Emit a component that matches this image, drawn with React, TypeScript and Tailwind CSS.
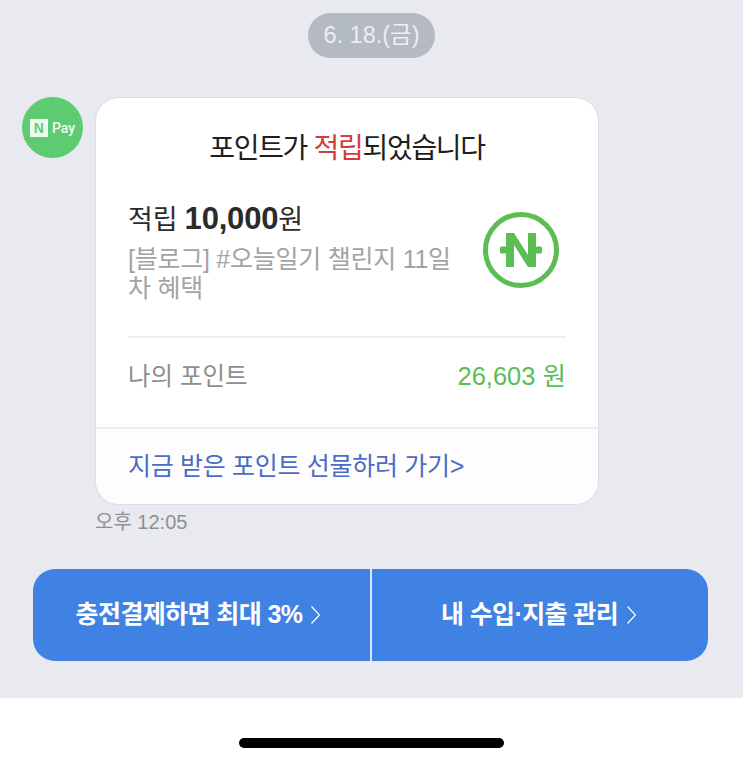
const font = "font-['Liberation_Sans','Noto_Sans_CJK_KR',sans-serif]";

function NPayLogo() {
    return (
        <div className="w-[61px] h-[61px] rounded-full bg-[#5ccb72] shrink-0 flex items-center justify-center gap-[4px]">
            <div className="w-[18px] h-[18px] bg-white/90 flex items-center justify-center text-[#5ccb72] text-[14px] font-bold leading-none">N</div>
            <span className="font-['Roboto',sans-serif] text-white/90 text-[14px] font-medium leading-none">Pay</span>
        </div>
    );
}

function PointIcon() {
    return (
        <svg width="78" height="78" viewBox="0 0 78 78" className="shrink-0">
            <circle cx="39" cy="39" r="35.5" fill="none" stroke="#5cbd55" strokeWidth="5" />
            <path d="M24 22h8l14 22V22h8v34h-8L32 34v22h-8z" fill="#5cbd55" />
            <rect x="18" y="35.5" width="7" height="7" rx="1.5" fill="#5cbd55" />
            <rect x="53" y="35.5" width="7" height="7" rx="1.5" fill="#5cbd55" />
        </svg>
    );
}

function Chevron() {
    return (
        <svg width="9" height="18" viewBox="0 0 9 18" fill="none" stroke="white" strokeWidth="1.2"><path d="M.5.5l8 8.5-8 8.5" /></svg>
    );
}

export default function App() {
    return (
        <div className={`${font} w-[743px] h-[763px] overflow-hidden bg-white flex flex-col`}>
            <div className="h-[698px] bg-[#e9eaef] flex flex-col">
                <div className="flex justify-center pt-[13px]">
                    <div className="w-[127px] h-[45px] rounded-full bg-[#b4bac1] text-[#eceef0] text-[23.5px] flex items-center justify-center">
                        6. 18.(금)
                    </div>
                </div>

                <div className="flex items-start gap-[12px] pl-[22px] pt-[39px]">
                    <NPayLogo />
                    <div className="w-[504px]">
                        <div className="h-[408px] bg-white rounded-[24px] border border-[#dcdde1] overflow-hidden flex flex-col">
                            <div className="text-center text-[28px] tracking-[-1.3px] text-[#1e1e1e] pt-[32px] leading-[38px]">
                                포인트가 <span className="text-[#d0403a]">적립</span>되었습니다
                            </div>
                            <div className="flex items-start justify-between mx-[32px] mt-[33px] h-[119px]">
                                <div className="w-[330px]">
                                    <div className="text-[27px] leading-[36px] tracking-[-0.2px] text-[#2b2b2b]">
                                        적립 <span className="text-[31px] font-bold">10,000</span>원
                                    </div>
                                    <div className="text-[25px] leading-[29px] tracking-[-0.25px] text-[#a3a3a3] mt-[7px]">
                                        [블로그] #오늘일기 챌린지 11일 차 혜택
                                    </div>
                                </div>
                                <div className="mr-[6px] mt-[10px]">
                                    <PointIcon />
                                </div>
                            </div>
                            <div className="mx-[32px] mt-[16px] flex-1 border-t-2 border-[#eeeeee] flex items-center justify-between h-[90px] pb-[10px]">
                                <span className="text-[24.5px] text-[#8e8e8e]">나의 포인트</span>
                                <span className="text-[25.5px] text-[#5cbd55] mt-[-2px]">26,603 원</span>
                            </div>
                            <div className="h-[77px] bg-[#fdfdfe] border-t-2 border-[#eeeeee] px-[32px] flex items-center text-[25px] text-[#4a6cc4] tracking-[-0.3px]">
                                지금 받은 포인트 선물하러 가기&gt;
                            </div>
                        </div>
                        <div className="text-[20px] text-[#8e9095] mt-[4px] leading-[26px]">오후 12:05</div>
                    </div>
                </div>

                <div className="ml-[33px] mr-[35px] mt-[34px] h-[92px] rounded-[22px] bg-[#3f82e3] flex text-white text-[25px] font-bold tracking-[-0.6px]">
                    <div className="w-[339px] flex items-center justify-center gap-[9px] pr-[7px] border-r-2 border-[#dbe7f8]">
                        충전결제하면 최대 3%
                        <Chevron />
                    </div>
                    <div className="flex-1 flex items-center justify-center gap-[9px] pr-[3px]">
                        내 수입·지출 관리
                        <Chevron />
                    </div>
                </div>
            </div>

            <div className="flex-1 flex justify-center pt-[40px]">
                <div className="w-[265px] h-[10px] rounded-full bg-black" />
            </div>
        </div>
    );
}
